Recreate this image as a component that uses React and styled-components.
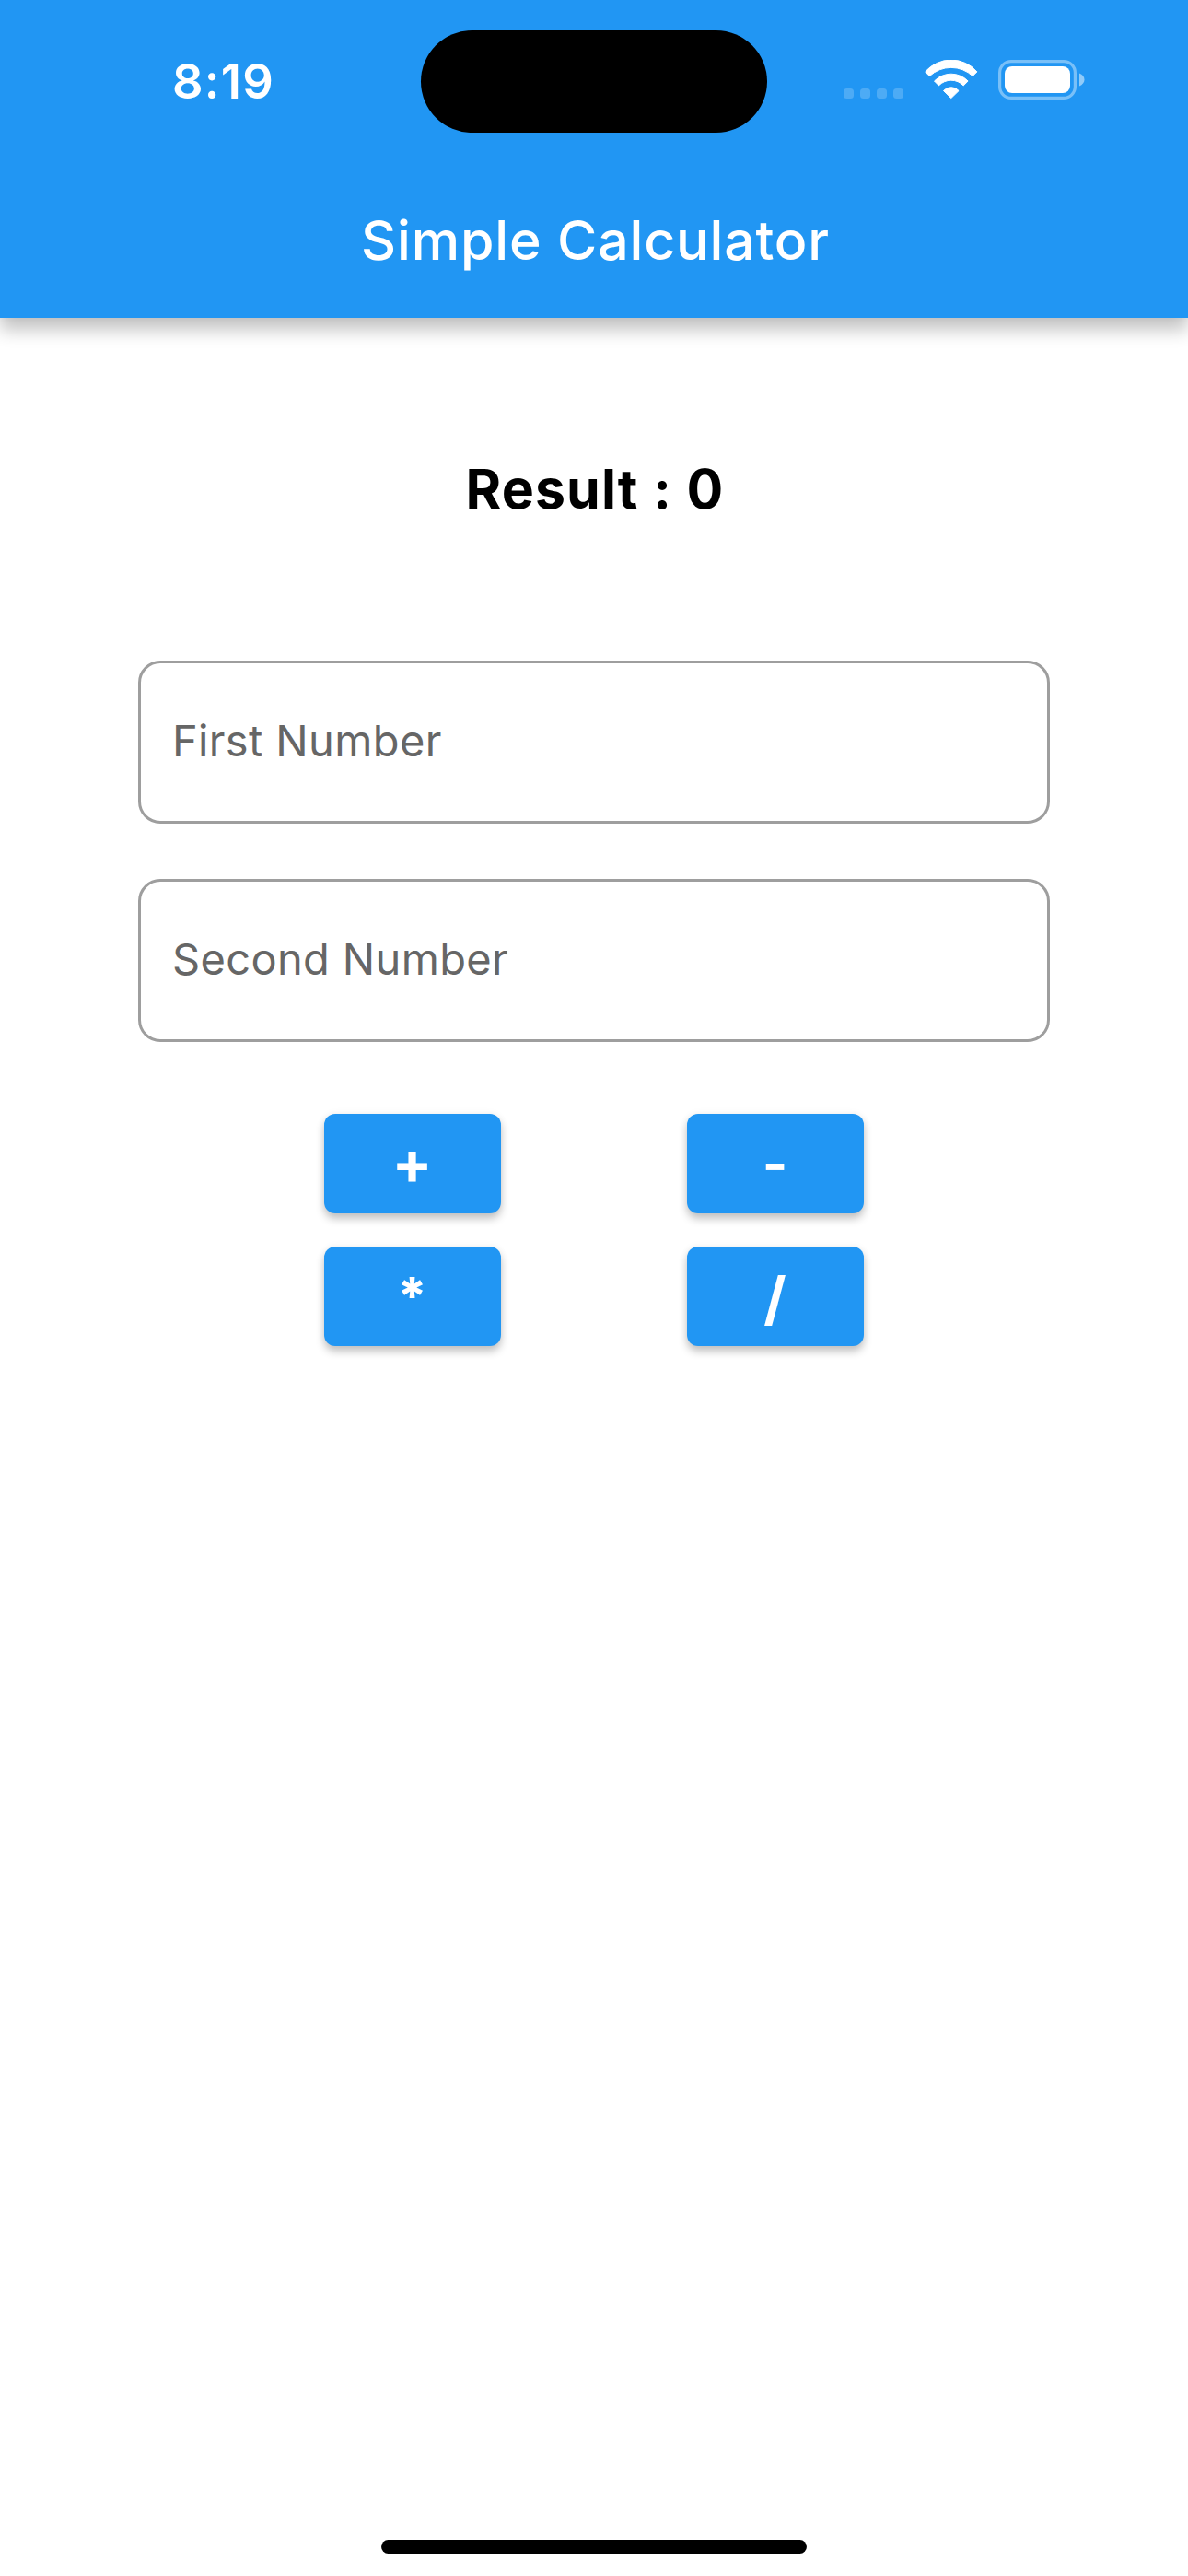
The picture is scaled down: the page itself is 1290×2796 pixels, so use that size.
import React, { useState } from "react";
import styled, { createGlobalStyle } from "styled-components";

const BLUE = "#2196f3";

const GlobalStyle = createGlobalStyle`
  *, *::before, *::after { box-sizing: border-box; }
  body {
    margin: 0;
    background: #fff;
    font-family: Inter, "Liberation Sans", sans-serif;
  }
`;

const Screen = styled.div`
  display: flex;
  flex-direction: column;
  width: 1290px;
  height: 2796px;
  overflow: hidden;
  background: #fff;
`;

const Header = styled.header`
  flex: none;
  display: flex;
  flex-direction: column;
  height: 345px;
  background: ${BLUE};
  color: #fff;
  box-shadow:
    0 13px 18px rgba(0, 0, 0, 0.24),
    0 0 8px rgba(0, 0, 0, 0.03);
`;

const StatusBar = styled.div`
  display: flex;
  align-items: flex-start;
  height: 177px;
  padding: 33px 112px 0 187px;
`;

const Clock = styled.time`
  width: 270px;
  padding-top: 23px;
  font-size: 52.5px;
  font-weight: 600;
  line-height: 64px;
  letter-spacing: 1.2px;
`;

const Island = styled.div`
  width: 376px;
  height: 111px;
  border-radius: 56px;
  background: #000;
`;

const StatusIcons = styled.div`
  display: flex;
  flex: 1;
  justify-content: flex-end;
  align-items: flex-start;
  padding-top: 32px;
`;

const SignalDots = styled.div`
  display: flex;
  gap: 7px;
  margin: 31px 23px 0 0;
`;

const Dot = styled.span`
  width: 11px;
  height: 11px;
  border-radius: 3.5px;
  background: rgba(255, 255, 255, 0.2);
`;

const WifiSvg = styled.svg`
  display: block;
  width: 58px;
  height: 43px;
  margin-right: 22px;
`;

const BatterySvg = styled.svg`
  display: block;
  width: 94px;
  height: 43px;
`;

const Title = styled.h1`
  margin: 0;
  padding: 48px 0 0 3px;
  font-size: 59px;
  font-weight: 450;
  line-height: 72px;
  letter-spacing: 0.85px;
  text-align: center;
`;

const Content = styled.main`
  flex: 1;
  display: flex;
  flex-direction: column;
  align-items: center;
  padding-top: 150px;
`;

const Result = styled.p`
  margin: 0 0 150px;
  padding-left: 2px;
  color: #000;
  font-size: 59px;
  font-weight: 680;
  line-height: 72px;
  letter-spacing: 1.1px;
  word-spacing: 0.5px;
`;

const NumberField = styled.input`
  width: 990px;
  height: 177px;
  margin-bottom: 60px;
  padding: 0 34px 4px;
  border: 3px solid #9e9e9e;
  border-radius: 24px;
  outline: none;
  background: transparent;
  color: #000;
  font-family: inherit;
  font-size: 47px;
  letter-spacing: 0.35px;

  &::placeholder {
    color: #666;
    opacity: 1;
  }
`;

const Keys = styled.div`
  display: grid;
  grid-template-columns: 192px 192px;
  column-gap: 202px;
  row-gap: 36px;
  margin-top: 18px;
`;

const Key = styled.button`
  display: flex;
  justify-content: center;
  align-items: center;
  height: 108px;
  padding: ${({ $top }) => $top}px 1px ${({ $bottom }) => $bottom}px 0;
  border: 0;
  border-radius: 12px;
  background: ${BLUE};
  color: #fff;
  font-family: inherit;
  font-size: ${({ $size }) => $size}px;
  font-weight: ${({ $weight }) => $weight};
  line-height: 72px;
  box-shadow:
    0 6px 10px rgba(0, 0, 0, 0.23),
    0 0 10px rgba(0, 0, 0, 0.05);
`;

const HomeIndicator = styled.div`
  flex: none;
  align-self: center;
  width: 462px;
  height: 15px;
  margin-bottom: 24px;
  border-radius: 8px;
  background: #000;
`;

const KEYS = [
  { symbol: "+", size: 65, weight: 740, top: 0, bottom: 2, run: (a, b) => a + b },
  { symbol: "-", size: 59, weight: 700, top: 0, bottom: 1, run: (a, b) => a - b },
  { symbol: "*", size: 56, weight: 850, top: 0, bottom: 0, run: (a, b) => a * b },
  { symbol: "/", size: 63, weight: 700, top: 3, bottom: 0, run: (a, b) => a / b },
];

function WifiIcon() {
  return (
    <WifiSvg viewBox="0 0 58 43" fill="#fff" stroke="#fff" strokeWidth="1" strokeLinejoin="round">
      <path d="M.7 12.9A37.2 37.2 0 0 1 56.9 12.9L52.2 17.6A34.3 34.3 0 0 0 5.4 17.6Z" />
      <path d="M10.5 23A25.4 25.4 0 0 1 47.1 23L42.2 27.9A18.6 18.6 0 0 0 15.4 27.9Z" />
      <path d="M20.5 33.5A11 11 0 0 1 37.1 33.5L28.8 41.6Z" />
    </WifiSvg>
  );
}

function BatteryIcon() {
  return (
    <BatterySvg viewBox="0 0 94 43" fill="#fff">
      <rect x="1.6" y="1.6" width="81.8" height="39.8" rx="12.4" fill="none" stroke="#fff" strokeOpacity=".4" strokeWidth="3.2" />
      <rect x="7" y="7" width="71" height="29" rx="8" />
      <path d="M88 14.6C91.4 16 93.5 18.5 93.5 21.5S91.4 27 88 28.400Z" fillOpacity=".5" />
    </BatterySvg>
  );
}

export default function App() {
  const [first, setFirst] = useState("");
  const [second, setSecond] = useState("");
  const [result, setResult] = useState(0);

  return (
    <>
      <GlobalStyle />
      <Screen>
        <Header>
          <StatusBar>
            <Clock>8:19</Clock>
            <Island />
            <StatusIcons>
              <SignalDots>
                <Dot />
                <Dot />
                <Dot />
                <Dot />
              </SignalDots>
              <WifiIcon />
              <BatteryIcon />
            </StatusIcons>
          </StatusBar>
          <Title>Simple Calculator</Title>
        </Header>
        <Content>
          <Result>Result : {result}</Result>
          <NumberField placeholder="First Number" value={first} onChange={(e) => setFirst(e.target.value)} />
          <NumberField placeholder="Second Number" value={second} onChange={(e) => setSecond(e.target.value)} />
          <Keys>
            {KEYS.map(({ symbol, size, weight, top, bottom, run }) => (
              <Key
                key={symbol}
                $size={size}
                $weight={weight}
                $top={top}
                $bottom={bottom}
                onClick={() => setResult(run(Number(first), Number(second)))}
              >
                {symbol}
              </Key>
            ))}
          </Keys>
        </Content>
        <HomeIndicator />
      </Screen>
    </>
  );
}
